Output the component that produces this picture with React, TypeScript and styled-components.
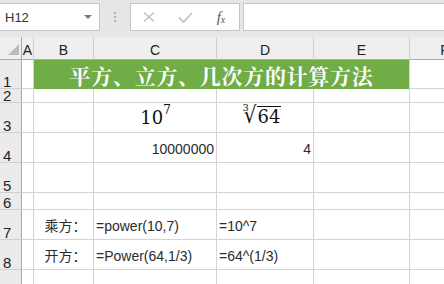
import React from "react";
import styled, { createGlobalStyle } from "styled-components";

const Global = createGlobalStyle`
  html, body { margin: 0; padding: 0; background: #ffffff; }
  body { font-family: "Liberation Sans", "Noto Sans CJK SC", sans-serif; }
`;

const Frame = styled.div`
  width: 444px;
  height: 284px;
  overflow: hidden;
  background: #ffffff;
  display: flex;
  flex-direction: column;
`;

const Toolbar = styled.div`
  flex: none;
  height: 37px;
  box-sizing: border-box;
  padding-top: 3px;
  background: #e6e6e6;
  display: flex;
  align-items: flex-start;
`;

const NameBox = styled.div`
  flex: none;
  width: 100px;
  height: 28px;
  box-sizing: border-box;
  background: #ffffff;
  border: 1px solid #c6c6c6;
  border-left: none;
  display: flex;
  align-items: center;
  justify-content: space-between;
  padding: 0 7px 0 5px;
  font-size: 13px;
  color: #333333;
`;

const DropArrow = styled.span`
  width: 0;
  height: 0;
  border-left: 4px solid transparent;
  border-right: 4px solid transparent;
  border-top: 4px solid #7a7a7a;
`;

const Grip = styled.div`
  flex: none;
  width: 30px;
  height: 28px;
  display: flex;
  flex-direction: column;
  align-items: center;
  justify-content: center;
  gap: 2px;
`;

const GripDot = styled.span`
  width: 2px;
  height: 2px;
  background: #b0b0b0;
`;

const ButtonGroup = styled.div`
  flex: none;
  width: 110px;
  height: 28px;
  box-sizing: border-box;
  background: #ffffff;
  border: 1px solid #c6c6c6;
  display: grid;
  grid-template-columns: 36px 36px 36px;
  align-items: center;
  justify-items: center;
`;

const FxLabel = styled.span`
  font-family: "Liberation Serif", serif;
  font-style: italic;
  font-size: 15px;
  color: #555555;
  line-height: 1;
  sub {
    font-size: 10px;
    vertical-align: -1px;
  }
`;

const FormulaInput = styled.div`
  flex: 1;
  margin-left: 3px;
  height: 28px;
  box-sizing: border-box;
  background: #ffffff;
  border: 1px solid #c6c6c6;
  border-right: none;
`;

const Sheet = styled.div`
  display: grid;
  grid-template-columns: 22px 12px 60px 123px 97px 96px 70px;
  grid-template-rows: 23px 29px 14px 30px 30px 30px 17px 30px 30px 30px;
`;

const Corner = styled.div`
  box-sizing: border-box;
  background: #efefef;
  border-right: 1px solid #ababab;
  border-bottom: 1px solid #ababab;
  display: flex;
  align-items: flex-end;
  justify-content: flex-end;
  padding: 0 2px 4px 0;
`;

const ColHeader = styled.div`
  box-sizing: border-box;
  background: #efefef;
  border-right: 1px solid #d0d0d0;
  border-bottom: 1px solid #ababab;
  display: flex;
  align-items: center;
  justify-content: center;
  padding-top: 3px;
  font-size: 14px;
  color: #222222;
  overflow: hidden;
`;

const RowHeader = styled.div`
  box-sizing: border-box;
  background: #ebebeb;
  border-right: 1px solid #ababab;
  border-bottom: 1px solid #d0d0d0;
  display: flex;
  align-items: flex-end;
  padding-left: 3px;
  font-size: 15px;
  line-height: 13px;
  color: #222222;
  overflow: hidden;
`;

const Cell = styled.div<{ $align?: "left" | "center" | "right" }>`
  box-sizing: border-box;
  border-right: 1px solid #d4d4d4;
  border-bottom: 1px solid #d4d4d4;
  display: flex;
  align-items: flex-end;
  justify-content: ${(p) =>
    p.$align === "right" ? "flex-end" : p.$align === "center" ? "center" : "flex-start"};
  padding: 0 2px 4px 2px;
  font-size: 14px;
  line-height: 18px;
  color: #2b2b2b;
  white-space: nowrap;
  overflow: hidden;
`;

const LabelCell = styled(Cell)`
  padding-left: 6px;
`;

const TitleCell = styled.div`
  grid-column: 3 / 7;
  box-sizing: border-box;
  background: #70ad47;
  border-right: 1px solid #d4d4d4;
  display: flex;
  align-items: center;
  justify-content: center;
  padding-top: 1px;
  font-family: "Noto Serif CJK SC", "Noto Sans CJK SC", serif;
  font-weight: 700;
  font-size: 21px;
  letter-spacing: 0.7px;
  color: #ffffff;
  white-space: nowrap;
`;

const MathCell = styled(Cell)`
  font-family: "DejaVu Serif", "Liberation Serif", serif;
  font-size: 18px;
  line-height: 18px;
  padding-bottom: 3px;
  color: #111111;
`;

const Power = styled.span`
  display: inline-flex;
  align-items: baseline;
  margin-left: 1px;
`;

const Exponent = styled.span`
  font-size: 12px;
  position: relative;
  top: -10px;
  margin-left: 0;
`;

const Radical = styled.span`
  display: inline-flex;
  align-items: baseline;
  margin-right: 7px;
`;

const RadIndex = styled.span`
  font-size: 10px;
  position: relative;
  top: -12px;
  margin-right: -5px;
`;

const RadSign = styled.span`
  font-family: "DejaVu Sans", sans-serif;
  font-size: 20px;
  display: inline-block;
  transform: scaleY(1.15);
  transform-origin: 50% 80%;
`;

const Radicand = styled.span`
  border-top: 1.5px solid #111111;
  padding: 2px 0 0 1px;
  line-height: 15px;
`;

const cols = ["A", "B", "C", "D", "E", "F"];

export default function App() {
  return (
    <Frame>
      <Global />
      <Toolbar>
        <NameBox>
          <span>H12</span>
          <DropArrow />
        </NameBox>
        <Grip>
          <GripDot />
          <GripDot />
          <GripDot />
        </Grip>
        <ButtonGroup>
          <svg width="12" height="10" viewBox="0 0 12 10">
            <path d="M1 0.5 L11 9.5 M11 0.5 L1 9.5" stroke="#c4c4c4" strokeWidth="1.6" fill="none" />
          </svg>
          <svg width="15" height="11" viewBox="0 0 15 11">
            <path d="M1 5.5 L5.5 10 L14 1" stroke="#c4c4c4" strokeWidth="1.8" fill="none" />
          </svg>
          <FxLabel>
            f<sub>x</sub>
          </FxLabel>
        </ButtonGroup>
        <FormulaInput />
      </Toolbar>

      <Sheet>
        <Corner>
          <svg width="11" height="11" viewBox="0 0 11 11">
            <path d="M11 0 L11 11 L0 11 Z" fill="#bcbcbc" />
          </svg>
        </Corner>
        {cols.map((c) => (
          <ColHeader key={c}>{c}</ColHeader>
        ))}

        <RowHeader>1</RowHeader>
        <Cell />
        <TitleCell>平方、立方、几次方的计算方法</TitleCell>
        <Cell />

        <RowHeader>2</RowHeader>
        <Cell />
        <Cell />
        <Cell />
        <Cell />
        <Cell />
        <Cell />

        <RowHeader>3</RowHeader>
        <Cell />
        <Cell />
        <MathCell $align="center">
          <Power>
            10<Exponent>7</Exponent>
          </Power>
        </MathCell>
        <MathCell $align="center">
          <Radical>
            <RadIndex>3</RadIndex>
            <RadSign>√</RadSign>
            <Radicand>64</Radicand>
          </Radical>
        </MathCell>
        <Cell />
        <Cell />

        <RowHeader>4</RowHeader>
        <Cell />
        <Cell />
        <Cell $align="right">10000000</Cell>
        <Cell $align="right">4</Cell>
        <Cell />
        <Cell />

        <RowHeader>5</RowHeader>
        <Cell />
        <Cell />
        <Cell />
        <Cell />
        <Cell />
        <Cell />

        <RowHeader>6</RowHeader>
        <Cell />
        <Cell />
        <Cell />
        <Cell />
        <Cell />
        <Cell />

        <RowHeader>7</RowHeader>
        <Cell />
        <LabelCell $align="center">乘方：</LabelCell>
        <Cell>=power(10,7)</Cell>
        <Cell>=10^7</Cell>
        <Cell />
        <Cell />

        <RowHeader>8</RowHeader>
        <Cell />
        <LabelCell $align="center">开方：</LabelCell>
        <Cell>=Power(64,1/3)</Cell>
        <Cell>=64^(1/3)</Cell>
        <Cell />
        <Cell />

        <RowHeader>9</RowHeader>
        <Cell />
        <Cell />
        <Cell />
        <Cell />
        <Cell />
        <Cell />
      </Sheet>
    </Frame>
  );
}
